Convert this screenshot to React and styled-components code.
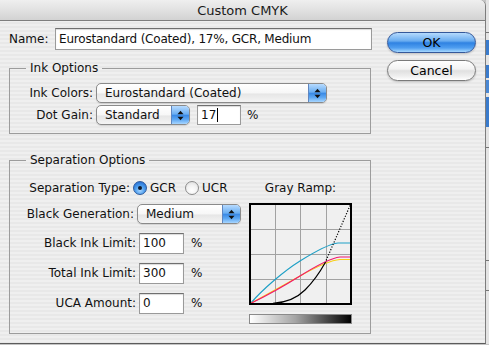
import React from "react";
import styled, { createGlobalStyle } from "styled-components";

const GlobalStyle = createGlobalStyle`
  html, body {
    margin: 0;
    padding: 0;
  }
  body {
    width: 489px;
    height: 345px;
    overflow: hidden;
    background: #c4c4c4;
    font-family: "DejaVu Sans", "Liberation Sans", sans-serif;
    font-size: 12px;
    color: #111;
  }
`;

const Screen = styled.div`
  display: flex;
  width: 489px;
  height: 345px;
`;

const Window = styled.div`
  width: 486px;
  height: 344px;
  flex: none;
  box-sizing: border-box;
  border-right: 1px solid #7d7d7d;
  border-bottom: 1px solid #5c5c5c;
  border-top-right-radius: 6px;
  background: repeating-linear-gradient(
    to bottom,
    #efefef 0 2px,
    #e8e8e8 2px 4px
  );
  display: flex;
  flex-direction: column;
  overflow: hidden;
`;

const TitleBar = styled.div`
  height: 20px;
  flex: none;
  border-bottom: 1px solid #7e7e7e;
  background: linear-gradient(to bottom, #efefef, #e0e0e0 55%, #d2d2d2);
  display: flex;
  align-items: center;
  justify-content: center;
  font-size: 13px;
  color: #1a1a1a;
`;

const Body = styled.div`
  display: flex;
  padding: 7px 0 0 9px;
`;

const Main = styled.div`
  width: 363px;
  display: flex;
  flex-direction: column;
`;

const NameRow = styled.div`
  display: flex;
  align-items: center;
  height: 22px;
`;

const NameLabel = styled.span`
  width: 46px;
`;

const TextField = styled.div`
  width: ${(p) => p.width}px;
  height: ${(p) => p.height || 20}px;
  box-sizing: border-box;
  border: 1px solid #9a9a9a;
  border-top-color: #6f6f6f;
  background: #fff;
  box-shadow: inset 0 1px 1px rgba(0, 0, 0, 0.15);
  padding: 0 3px;
  display: flex;
  align-items: center;
  white-space: nowrap;
  overflow: hidden;
  letter-spacing: ${(p) => (p.tight ? "-0.2px" : "0")};
`;

const Caret = styled.span`
  display: inline-block;
  width: 1px;
  height: 14px;
  background: #000;
  margin-left: 1px;
`;

const Group = styled.fieldset`
  margin: ${(p) => p.top}px 0 0 0;
  padding: 0 0 ${(p) => p.bottom}px 0;
  width: 362px;
  box-sizing: border-box;
  min-width: 0;
  border: 1px solid #9c9c9c;
`;

const Legend = styled.legend`
  margin-left: 16px;
  padding: 0 4px;
  line-height: 15px;
`;

const InkGrid = styled.div`
  display: grid;
  grid-template-columns: 83px auto;
  column-gap: 3px;
  row-gap: 2px;
  padding-top: 7px;
  align-items: center;
`;

const Label = styled.span`
  text-align: right;
  white-space: nowrap;
  line-height: 20px;
`;

const Inline = styled.div`
  display: flex;
  align-items: center;
`;

const Popup = styled.div`
  width: ${(p) => p.width}px;
  height: 20px;
  box-sizing: border-box;
  border: 1px solid #8a8a8a;
  border-radius: 5px;
  background: linear-gradient(to bottom, #ffffff, #f7f7f7 50%, #e6e6e6 55%, #f4f4f4);
  box-shadow: 0 1px 1px rgba(0, 0, 0, 0.12);
  display: flex;
  overflow: hidden;
`;

const PopupText = styled.span`
  flex: 1;
  padding-left: 8px;
  line-height: 18px;
  white-space: nowrap;
`;

const PopupArrow = styled.span`
  width: 17px;
  flex: none;
  border-left: 1px solid #5f86c0;
  background: linear-gradient(to bottom, #b7dbff, #6aaef2 45%, #3a8ae6 52%, #5ea8f3 75%, #a8d6ff);
  display: flex;
  align-items: center;
  justify-content: center;
`;

const Percent = styled.span`
  margin-left: ${(p) => p.gap}px;
`;

const SepContent = styled.div`
  display: flex;
  padding-top: 10px;
`;

const SepLeft = styled.div`
  width: 239px;
  display: flex;
  flex-direction: column;
`;

const SepRow = styled.div`
  display: flex;
  align-items: center;
  height: 20px;
  margin-top: ${(p) => p.top}px;
  margin-left: ${(p) => p.shift}px;
`;

const SepLabel = styled(Label)`
  width: 124px;
  margin-right: 3px;
`;

const RadioCircle = styled.span`
  width: 14px;
  height: 14px;
  box-sizing: border-box;
  border-radius: 50%;
  border: 1px solid ${(p) => (p.checked ? "#2d5a9c" : "#8c8c8c")};
  background: ${(p) =>
    p.checked
      ? "radial-gradient(circle at 50% 70%, #a9d6ff 0%, #4c9ded 45%, #2a74d6 80%)"
      : "radial-gradient(circle at 50% 70%, #ffffff 0%, #f2f2f2 50%, #d8d8d8 100%)"};
  display: flex;
  align-items: center;
  justify-content: center;
  flex: none;
`;

const RadioDot = styled.span`
  width: 4px;
  height: 4px;
  border-radius: 50%;
  background: #0d1a2e;
`;

const RadioText = styled.span`
  margin: 0 9px 0 3px;
`;

const Ramp = styled.div`
  width: 103px;
  display: flex;
  flex-direction: column;
  align-items: center;
  padding-top: 3px;
`;

const RampLabel = styled.span`
  line-height: 15px;
`;

const RampChart = styled.svg`
  display: block;
  margin-top: 7px;
`;

const RampBar = styled.div`
  width: 103px;
  height: 10px;
  margin-top: 9px;
  box-sizing: border-box;
  border: 1px solid #8a8a8a;
  background: linear-gradient(to right, #ffffff, #a4a4a4 45%, #000000);
`;

const ButtonColumn = styled.div`
  margin-left: 15px;
  padding-top: 4px;
  display: flex;
  flex-direction: column;
  gap: 7px;
`;

const AquaButton = styled.div`
  width: 89px;
  height: 21px;
  box-sizing: border-box;
  border-radius: 11px;
  border: 1px solid ${(p) => (p.primary ? "#34589a" : "#7a7a7a")};
  background: ${(p) =>
    p.primary
      ? "linear-gradient(to bottom, #b5dafd 0%, #69acf0 42%, #2f82e2 52%, #4f9ef0 78%, #a6d8ff 100%)"
      : "linear-gradient(to bottom, #ffffff 0%, #f3f3f3 42%, #e0e0e0 52%, #efefef 80%, #ffffff 100%)"};
  box-shadow: 0 1px 2px rgba(0, 0, 0, 0.2);
  display: flex;
  align-items: center;
  justify-content: center;
  font-size: 12.5px;
  color: #000;
`;

const Peek = styled.div`
  width: 3px;
  height: 344px;
  background: #e4e4e4;
  display: flex;
  flex-direction: column;
`;

const PeekBit = styled.div`
  height: ${(p) => p.h}px;
  margin-top: ${(p) => p.top}px;
  background: ${(p) => p.color};
  flex: none;
`;

const peekBits = [
  { top: 32, h: 1, color: "#777" },
  { top: 7, h: 15, color: "#3a7bcc" },
  { top: 10, h: 13, color: "#3a7bcc" },
  { top: 2, h: 13, color: "#4a88d4" },
  { top: 4, h: 30, color: "#3a7bcc" },
  { top: 20, h: 1, color: "#777" },
  { top: 112, h: 1, color: "#777" },
  { top: 29, h: 1, color: "#777" },
];

const Arrows = () => (
  <svg width="7" height="11" viewBox="0 0 7 11">
    <polygon points="0.5,4.2 3.5,0.8 6.5,4.2" fill="#111" />
    <polygon points="0.5,6.8 3.5,10.2 6.5,6.8" fill="#111" />
  </svg>
);

const PopupButton = ({ width, children }) => (
  <Popup width={width}>
    <PopupText>{children}</PopupText>
    <PopupArrow>
      <Arrows />
    </PopupArrow>
  </Popup>
);

const Radio = ({ checked, children }) => (
  <>
    <RadioCircle checked={checked}>{checked && <RadioDot />}</RadioCircle>
    <RadioText>{children}</RadioText>
  </>
);

const GrayRampChart = () => (
  <RampChart width="103" height="102" viewBox="0 0 103 102">
    <rect x="1" y="1" width="101" height="100" fill="#f0f0f0" />
    <g stroke="#a2a2a2" strokeWidth="1">
      <line x1="26.5" y1="1" x2="26.5" y2="101" />
      <line x1="51.5" y1="1" x2="51.5" y2="101" />
      <line x1="77.5" y1="1" x2="77.5" y2="101" />
      <line x1="1" y1="26.5" x2="102" y2="26.5" />
      <line x1="1" y1="51.5" x2="102" y2="51.5" />
      <line x1="1" y1="76.5" x2="102" y2="76.5" />
    </g>
    <g fill="none" strokeWidth="1.2">
      <path d="M1.5,100.5 C14,86 35,68 51,58 S80,41 89,40 L102,40" stroke="#1fa0c6" />
      <path d="M1.5,100.5 C15,93 35,82 51,73 S83,57 91,56.5 L102,56.5" stroke="#f7cf12" />
      <path d="M1.5,100.5 C15,94 35,83 51,73 S82,55 91,54 L102,54" stroke="#f0186e" />
      <path d="M1.5,100.5 L24,100.3 C38,99.5 48,95 56,87 S71,69 76,60" stroke="#000" />
      <path d="M76,60 L101.5,1.5" stroke="#000" strokeDasharray="1.2 1.6" />
    </g>
    <rect x="1" y="1" width="101" height="100" fill="none" stroke="#000" strokeWidth="2" />
  </RampChart>
);

const sepRows = [
  { label: "Black Ink Limit:", value: "100", top: 9 },
  { label: "Total Ink Limit:", value: "300", top: 10 },
  { label: "UCA Amount:", value: "0", top: 10 },
];

const App = () => {
  return (
    <>
      <GlobalStyle />
      <Screen>
        <Window>
          <TitleBar>Custom CMYK</TitleBar>
          <Body>
            <Main>
              <NameRow>
                <NameLabel>Name:</NameLabel>
                <TextField width={317} height={22} tight>
                  Eurostandard (Coated), 17%, GCR, Medium
                </TextField>
              </NameRow>

              <Group top={11} bottom={8}>
                <Legend>Ink Options</Legend>
                <InkGrid>
                  <Label>Ink Colors:</Label>
                  <PopupButton width={231}>Eurostandard (Coated)</PopupButton>
                  <Label>Dot Gain:</Label>
                  <Inline>
                    <PopupButton width={94}>Standard</PopupButton>
                    <Percent gap={7} />
                    <TextField width={44}>
                      17
                      <Caret />
                    </TextField>
                    <Percent gap={6}>%</Percent>
                  </Inline>
                </InkGrid>
              </Group>

              <Group top={19} bottom={9}>
                <Legend>Separation Options</Legend>
                <SepContent>
                  <SepLeft>
                    <SepRow top={0} shift={-4}>
                      <SepLabel>Separation Type:</SepLabel>
                      <Radio checked>GCR</Radio>
                      <Radio>UCR</Radio>
                    </SepRow>
                    <SepRow top={6} shift={0}>
                      <SepLabel>Black Generation:</SepLabel>
                      <PopupButton width={104}>Medium</PopupButton>
                    </SepRow>
                    {sepRows.map((row) => (
                      <SepRow key={row.label} top={row.top} shift={2}>
                        <SepLabel>{row.label}</SepLabel>
                        <TextField width={45} height={21}>
                          {row.value}
                        </TextField>
                        <Percent gap={7}>%</Percent>
                      </SepRow>
                    ))}
                  </SepLeft>
                  <Ramp>
                    <RampLabel>Gray Ramp:</RampLabel>
                    <GrayRampChart />
                    <RampBar />
                  </Ramp>
                </SepContent>
              </Group>
            </Main>

            <ButtonColumn>
              <AquaButton primary>OK</AquaButton>
              <AquaButton>Cancel</AquaButton>
            </ButtonColumn>
          </Body>
        </Window>
        <Peek>
          {peekBits.map((bit, i) => (
            <PeekBit key={i} {...bit} />
          ))}
        </Peek>
      </Screen>
    </>
  );
};

export default App;
